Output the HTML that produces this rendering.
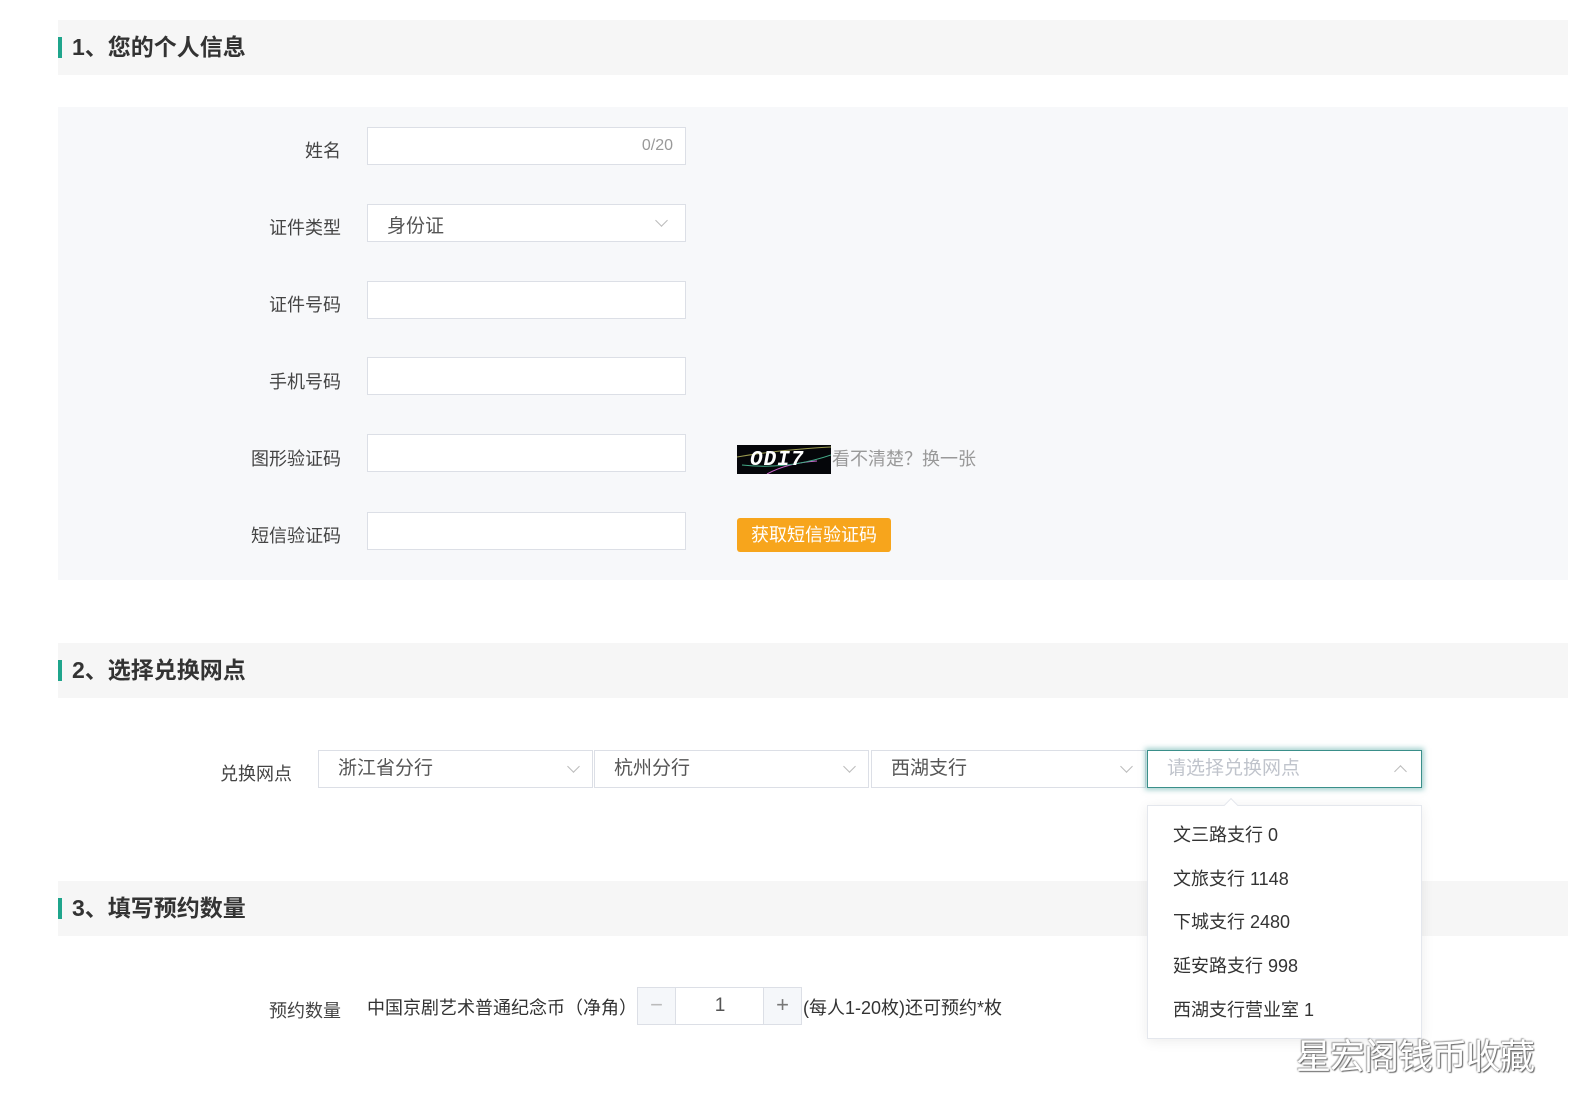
<!DOCTYPE html>
<html><head><meta charset="utf-8">
<style>
*{box-sizing:border-box;margin:0;padding:0}
body{width:1592px;height:1119px;background:#fff;position:relative;overflow:hidden;font-family:"Liberation Sans","Noto Sans CJK SC",sans-serif;color:#333}
.abs{position:absolute}
.hdr{position:absolute;left:58px;width:1510px;height:55px;background:#f6f6f6}
.hdr .bar{position:absolute;left:0;top:17px;width:4px;height:21px;background:#1fa58c}
.hdr .t{position:absolute;left:14px;top:0;line-height:55px;font-size:23px;font-weight:bold;color:#333}
.lbl{position:absolute;width:200px;text-align:right;font-size:18px;color:#444;line-height:24px}
.inp{position:absolute;left:367px;width:319px;height:38px;background:#fff;border:1px solid #dcdfe6}
.sel{position:absolute;top:750px;height:38px;background:#fff;border:1px solid #dcdfe6;font-size:19px;color:#555;line-height:36px;padding-left:19px}
.chev{position:absolute;right:14px;top:13px;width:9px;height:9px;border-right:1px solid #bbb;border-bottom:1px solid #bbb;transform:rotate(45deg)}
.item{position:absolute;left:25px;font-size:18px;color:#333;line-height:24px}
</style></head><body>

<div class="hdr" style="top:20px"><div class="bar"></div><div class="t">1、您的个人信息</div></div>

<div class="abs" style="left:58px;top:107px;width:1510px;height:473px;background:#f7f8fa"></div>

<div class="lbl" style="left:141px;top:139px">姓名</div>
<div class="inp" style="top:127px"><span class="abs" style="right:12px;top:9px;font-size:16px;color:#999">0/20</span></div>

<div class="lbl" style="left:141px;top:216px">证件类型</div>
<div class="inp" style="top:204px"><span class="abs" style="left:19px;top:6px;font-size:19px;color:#555">身份证</span><div class="chev" style="right:19px;top:11px"></div></div>

<div class="lbl" style="left:141px;top:293px">证件号码</div>
<div class="inp" style="top:281px"></div>

<div class="lbl" style="left:141px;top:370px">手机号码</div>
<div class="inp" style="top:357px"></div>

<div class="lbl" style="left:141px;top:447px">图形验证码</div>
<div class="inp" style="top:434px"></div>
<div class="abs" style="left:737px;top:445px;width:94px;height:29px;background:#05060a;overflow:hidden">
<svg width="94" height="29" class="abs" style="left:0;top:0"><path d="M0 12 Q40 5 94 2" stroke="#9a9a50" fill="none"/><path d="M30 29 Q50 18 80 16" stroke="#c6c" fill="none"/><path d="M5 20 Q50 25 94 10" stroke="#4a8" fill="none"/></svg>
<span class="abs" style="left:13px;top:4px;font-size:21px;font-style:italic;font-weight:bold;color:#fff;font-family:'Liberation Mono',monospace;letter-spacing:1px">ODI7</span></div>
<div class="abs" style="left:832px;top:447px;font-size:18px;color:#999;line-height:24px">看不清楚？换一张</div>

<div class="lbl" style="left:141px;top:524px">短信验证码</div>
<div class="inp" style="top:512px"></div>
<div class="abs" style="left:737px;top:518px;width:154px;height:34px;background:#f7a51c;border-radius:3px;color:#fff;font-size:18px;line-height:34px;text-align:center">获取短信验证码</div>

<div class="hdr" style="top:643px"><div class="bar"></div><div class="t">2、选择兑换网点</div></div>

<div class="lbl" style="left:92px;top:762px">兑换网点</div>
<div class="sel" style="left:318px;width:275px">浙江省分行<div class="chev" style="top:11px"></div></div>
<div class="sel" style="left:594px;width:275px">杭州分行<div class="chev" style="top:11px"></div></div>
<div class="sel" style="left:871px;width:275px">西湖支行<div class="chev" style="top:11px"></div></div>
<div class="sel" style="left:1147px;width:275px;border:1px solid #3a8f8a;box-shadow:0 0 5px 2px rgba(90,170,165,.55);color:#c0c4cc">请选择兑换网点<div class="chev" style="top:16px;right:16px;transform:rotate(-135deg)"></div></div>

<div class="hdr" style="top:881px"><div class="bar"></div><div class="t">3、填写预约数量</div></div>

<div class="abs" style="left:1147px;top:805px;width:275px;height:234px;background:#fff;border:1px solid #e4e7ed;box-shadow:0 2px 12px rgba(0,0,0,.08)">
<div class="abs" style="left:78px;top:-6px;width:10px;height:10px;background:#fff;border-left:1px solid #e4e7ed;border-top:1px solid #e4e7ed;transform:rotate(45deg)"></div>
<div class="item" style="top:17px">文三路支行 0</div>
<div class="item" style="top:61px">文旅支行 1148</div>
<div class="item" style="top:104px">下城支行 2480</div>
<div class="item" style="top:148px">延安路支行 998</div>
<div class="item" style="top:192px">西湖支行营业室 1</div>
</div>

<div class="lbl" style="left:141px;top:999px">预约数量</div>
<div class="abs" style="left:367px;top:996px;font-size:18px;color:#333;line-height:24px">中国京剧艺术普通纪念币（净角）:</div>
<div class="abs" style="left:637px;top:987px;width:165px;height:38px;border:1px solid #dcdfe6;background:#fff">
<div class="abs" style="left:0;top:0;width:38px;height:36px;background:#f5f7fa;border-right:1px solid #dcdfe6;color:#bbb;font-size:22px;text-align:center;line-height:34px">−</div>
<div class="abs" style="left:38px;top:0;width:88px;height:36px;text-align:center;font-size:19px;line-height:36px;color:#555">1</div>
<div class="abs" style="right:0;top:0;width:38px;height:36px;background:#f5f7fa;border-left:1px solid #dcdfe6;color:#777;font-size:22px;text-align:center;line-height:34px">+</div>
</div>
<div class="abs" style="left:803px;top:996px;font-size:18px;color:#333;line-height:24px">(每人1-20枚)还可预约*枚</div>

<div class="abs" style="left:1296px;top:1036px;font-size:35px;color:#fff;letter-spacing:-1px;text-shadow:1px 1px 1px #666,-1px -1px 1px #aaa,0 0 2px #888;line-height:44px">星宏阁钱币收藏</div>
</body></html>
